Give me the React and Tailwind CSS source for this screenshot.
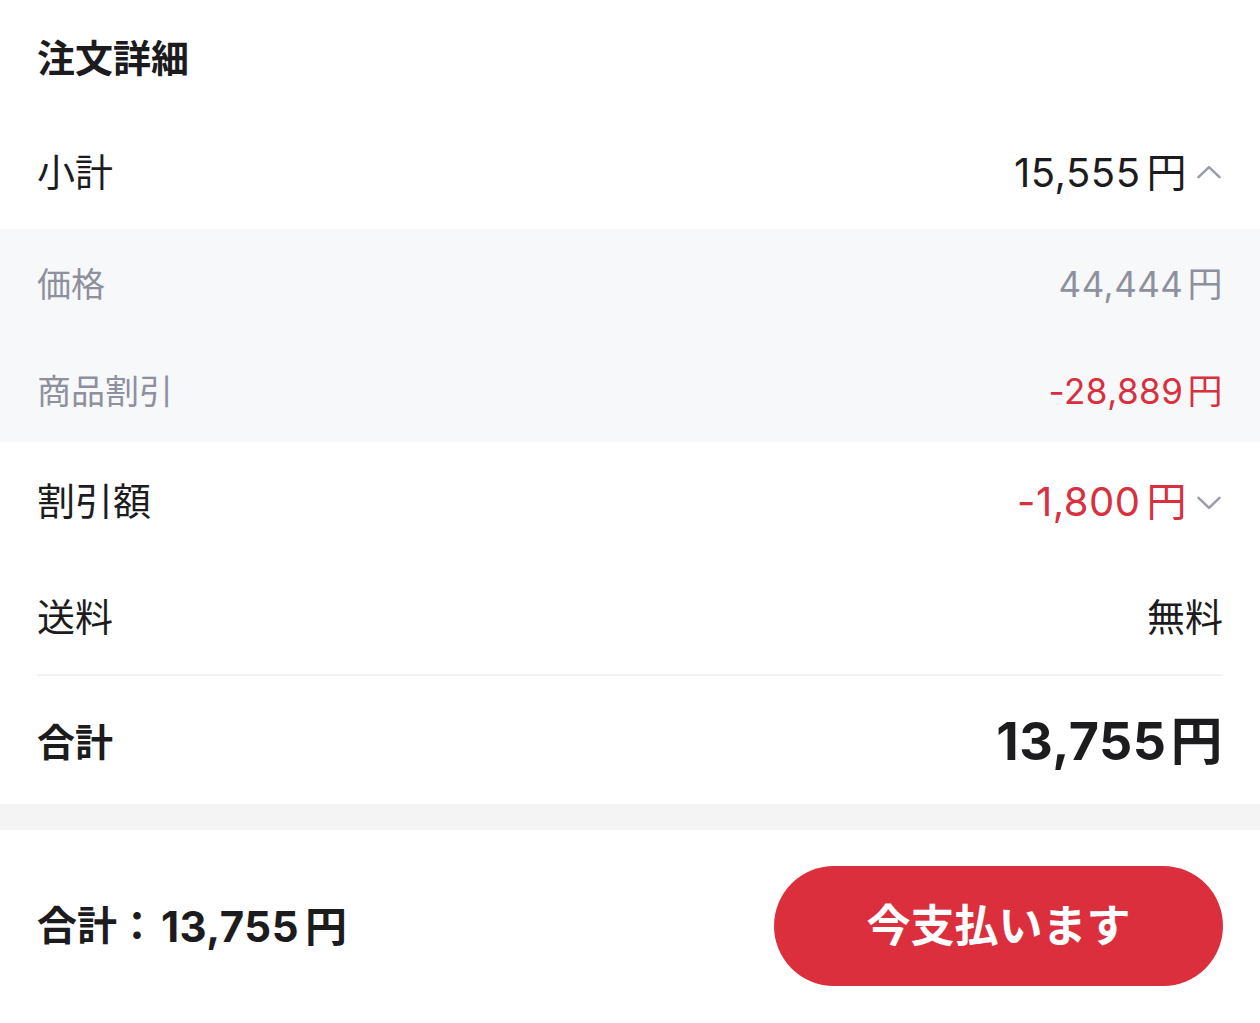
import React from "react";

const font = { fontFamily: 'Inter, "Noto Sans CJK JP", sans-serif' };

const ChevronUp = () => (
  <svg width="28" height="28" viewBox="0 0 24 24" fill="none" stroke="#9a9cab" strokeWidth="2.2" strokeLinecap="round" strokeLinejoin="round" className="ml-2">
    <path d="M3 15.5l9-8.5 9 8.5" />
  </svg>
);

const ChevronDown = () => (
  <svg width="28" height="28" viewBox="0 0 24 24" fill="none" stroke="#9a9cab" strokeWidth="2.2" strokeLinecap="round" strokeLinejoin="round" className="ml-2">
    <path d="M3 8.5l9 8.5 9-8.5" />
  </svg>
);

// amount with a little gap before 円, like the reference
const Yen = ({ value, className, gap = "ml-[6px]" }) => (
  <span className={`tracking-[0.5px] ${className || ""}`}>
    {value}
    <span className={gap}>円</span>
  </span>
);

const App = () => {
  return (
    <div className="w-[1260px] h-[1023px] bg-white text-[#1c1c1e] flex flex-col" style={font}>
      {/* details */}
      <div className="px-[37px] h-[116px] flex items-center">
        <h2 className="text-[38px] font-bold">注文詳細</h2>
      </div>

      <div className="px-[37px] h-[113px] flex items-center justify-between text-[38px]">
        <span>小計</span>
        <div className="flex items-center">
          <Yen value="15,555" className="text-[40px]" />
          <ChevronUp />
        </div>
      </div>

      <div className="bg-[#f7f8fa] px-[37px] text-[#8e909e] text-[34px]">
        <div className="h-[107px] flex items-center justify-between pt-1">
          <span>価格</span>
          <Yen value="44,444" className="text-[35px]" gap="ml-[4px]" />
        </div>
        <div className="h-[106px] flex items-center justify-between pt-1">
          <span>商品割引</span>
          <Yen value="-28,889" className="text-[35px] text-[#d8303f]" gap="ml-[4px]" />
        </div>
      </div>

      <div className="px-[37px] h-[119px] flex items-center justify-between text-[38px]">
        <span>割引額</span>
        <div className="flex items-center">
          <Yen value="-1,800" className="text-[40px] text-[#d8303f]" />
          <ChevronDown />
        </div>
      </div>

      <div className="px-[37px] h-[113px] flex items-center justify-between text-[38px]">
        <span>送料</span>
        <span>無料</span>
      </div>

      <div className="mx-[37px] h-[2px] bg-[#f2f2f2]" />

      <div className="px-[37px] h-[128px] flex items-center justify-between pt-1">
        <span className="text-[38px] font-bold">合計</span>
        <Yen value="13,755" className="text-[52px] font-bold" gap="ml-[4px]" />
      </div>

      <div className="h-[26px] bg-[#f4f4f4]" />

      {/* bottom bar */}
      <div className="flex-1 px-[37px] pt-[36px] flex items-start justify-between">
        <div className="h-[120px] flex items-center text-[40px] font-bold">
          <span>合計：</span>
          <Yen value="13,755" className="ml-1 text-[42px]" />
        </div>
        <button className="w-[449px] h-[120px] rounded-full bg-[#dc2f3e] text-white text-[44px] font-bold">
          今支払います
        </button>
      </div>
    </div>
  );
};

export default App;
